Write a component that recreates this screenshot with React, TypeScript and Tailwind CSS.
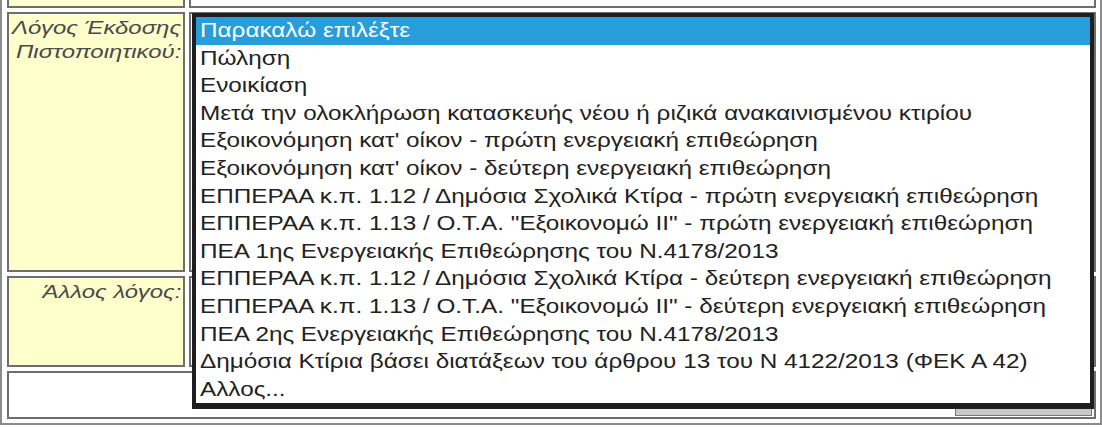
import React from "react";

const items = [
  "Παρακαλώ επιλέξτε",
  "Πώληση",
  "Ενοικίαση",
  "Μετά την ολοκλήρωση κατασκευής νέου ή ριζικά ανακαινισμένου κτιρίου",
  "Εξοικονόμηση κατ' οίκον - πρώτη ενεργειακή επιθεώρηση",
  "Εξοικονόμηση κατ' οίκον - δεύτερη ενεργειακή επιθεώρηση",
  "ΕΠΠΕΡΑΑ κ.π. 1.12 / Δημόσια Σχολικά Κτίρα - πρώτη ενεργειακή επιθεώρηση",
  'ΕΠΠΕΡΑΑ κ.π. 1.13 / Ο.Τ.Α. "Εξοικονομώ ΙΙ" - πρώτη ενεργειακή επιθεώρηση',
  "ΠΕΑ 1ης Ενεργειακής Επιθεώρησης του Ν.4178/2013",
  "ΕΠΠΕΡΑΑ κ.π. 1.12 / Δημόσια Σχολικά Κτίρα - δεύτερη ενεργειακή επιθεώρηση",
  'ΕΠΠΕΡΑΑ κ.π. 1.13 / Ο.Τ.Α. "Εξοικονομώ ΙΙ" - δεύτερη ενεργειακή επιθεώρηση',
  "ΠΕΑ 2ης Ενεργειακής Επιθεώρησης του Ν.4178/2013",
  "Δημόσια Κτίρια βάσει διατάξεων του άρθρου 13 του Ν 4122/2013 (ΦΕΚ Α 42)",
  "Αλλος...",
];

function Label({ lines }: { lines: string[] }) {
  return (
    <div className="flex flex-col items-end pr-[2px] pt-[2px] text-[18px] leading-[24px] italic text-[#4a4a4a]">
      {lines.map((l) => (
        <span key={l} className="inline-block whitespace-nowrap origin-right scale-x-[1.33]">
          {l}
        </span>
      ))}
    </div>
  );
}

export default function App() {
  return (
    <div
      className="relative w-[1102px] h-[427px] overflow-hidden bg-white"
      style={{ fontFamily: '"Liberation Sans", Arial, sans-serif' }}
    >
      <div className="-mt-[38px] w-[1102px] border-2 border-[#8c8c8c] pl-[5px] pr-[4px] py-[4px] grid grid-cols-[178px_907px] gap-[4px]">
        <div className="h-[40px] border-2 border-[#6e6e6e] bg-[#ffffcc]" />
        <div className="h-[40px] border-2 border-[#6e6e6e] bg-white" />

        <div className="h-[260px] border-2 border-[#6e6e6e] bg-[#ffffcc]">
          <Label lines={["Λόγος Έκδοσης", "Πιστοποιητικού:"]} />
        </div>
        <div className="h-[260px] border-2 border-[#6e6e6e] bg-white" />

        <div className="h-[91px] border-2 border-[#6e6e6e] bg-[#ffffcc]">
          <Label lines={["Άλλος λόγος:"]} />
        </div>
        <div className="h-[91px] border-2 border-[#6e6e6e] bg-white" />

        <div className="col-span-2 h-[48px] border-2 border-[#6e6e6e] bg-white flex justify-end items-end pr-[2px] pb-[1px]">
          <div className="w-[137px] h-[30px] bg-[#c8c8c8] border border-[#777]" />
        </div>
      </div>

      <div className="absolute left-[192px] top-[13px] w-[902px] border-[#1e1e1e] border-t-[4px] border-l-[4px] border-r-[4px] border-b-[6px] bg-white">
        {items.map((it, i) => (
          <div
            key={i}
            className={
              "h-[27.6px] leading-[27.6px] pl-[4px] text-[20px] whitespace-nowrap " +
              (i === 0 ? "bg-[#279dd9] text-white" : "text-[#222]")
            }
          >
            <span className="inline-block origin-left scale-x-[1.215]">{it}</span>
          </div>
        ))}
      </div>
    </div>
  );
}
